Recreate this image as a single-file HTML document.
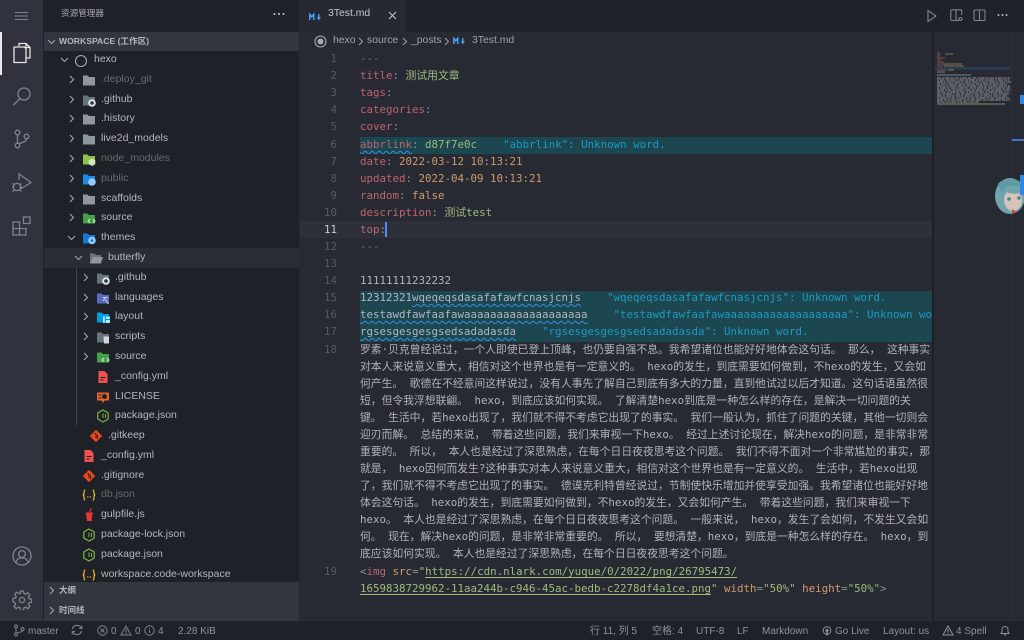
<!DOCTYPE html>
<html lang="zh"><head><meta charset="utf-8"><title>3Test.md</title>
<style>
html,body{margin:0;padding:0;width:1024px;height:640px;overflow:hidden;background:#282a33}
body{position:relative;font-family:"Liberation Sans","Noto Sans CJK SC",sans-serif;color:#b4b6bc}
div,span,svg{box-sizing:border-box}
.abs,.abs>*{position:absolute}
#act{position:absolute;left:0;top:0;width:43px;height:621px;background:#30333d}
#side{position:absolute;left:43px;top:0;width:256px;height:621px;background:#1f2129}
#tabs{position:absolute;left:299px;top:0;width:725px;height:32px;background:#20222a}
#tab{position:absolute;left:299px;top:0;width:107px;height:32px;background:#272932}
#status{position:absolute;left:0;top:621px;width:1024px;height:19px;background:#1f2129;font-size:10px;color:#8f9198;line-height:21px}
#status span{position:absolute;top:0;white-space:pre}
#status svg{position:absolute}
.sec{position:absolute;left:44px;width:255px;background:#33353f}
.r{position:absolute;left:0;width:300px;height:20px;margin-top:1px;line-height:19px;font-size:10.5px;color:#b4b6bc;white-space:pre}
.r.dim{color:#686a72}
.r .t{position:absolute;left:calc(94px + 7px*var(--d))}
.r .c{position:absolute;left:calc(60px + 7px*var(--d));top:5px;width:9px;height:9px}
.r .i{position:absolute;left:calc(75px + 7px*var(--d));top:3px;width:14px;height:14px}
.ic{position:absolute;fill:none;stroke:#80838c;stroke-width:1.1}
.g{position:absolute;left:359.5px;width:572px;background:#1c4650}
.n{position:absolute;left:300px;width:37px;text-align:right;font:10.8px/17px "DejaVu Sans Mono",monospace;color:#565963}
.l{position:absolute;left:360px;width:572px;overflow:hidden;height:18px;font:10.8px/17px "DejaVu Sans Mono","Noto Sans CJK SC",monospace;color:#b4b6bc;white-space:pre}
.k{color:#bd6470}.p{color:#8e9097}.s{color:#9fba7b}.o{color:#cf9a6b}.d{color:#1c9ac0}.m{color:#6a6d77}
.w{text-decoration:underline wavy #3a8fe0 1px;text-underline-offset:2px}
.z{position:absolute;left:360px;width:573px;height:17px;font:10.8px/17px "DejaVu Sans Mono","Noto Sans CJK SC",monospace;color:#b0b2b8;white-space:pre;overflow:hidden}
.u{text-decoration:underline #9fba7b 1px;text-underline-offset:2px}
</style></head><body>

<svg width="0" height="0" style="position:absolute">
<defs>
<symbol id="chr" viewBox="0 0 9 9"><path d="M3 1l3.5 3.5L3 8" fill="none" stroke="#a8aab0" stroke-width="1"/></symbol>
<symbol id="chd" viewBox="0 0 9 9"><path d="M1 3l3.5 3.5L8 3" fill="none" stroke="#a8aab0" stroke-width="1"/></symbol>
<symbol id="fg" viewBox="0 0 14 14"><path d="M1 2.5h4.5l1.5 1.5h6v8.5H1z" fill="#8f979b"/></symbol>
<symbol id="fgit" viewBox="0 0 14 14"><path d="M1 2.5h4.5l1.5 1.5h6v8.5H1z" fill="#66757c"/><circle cx="10" cy="10" r="3.8" fill="#dfe3e6"/><circle cx="10" cy="10" r="1.8" fill="#30333d"/></symbol>
<symbol id="fnode" viewBox="0 0 14 14"><path d="M1 2.5h4.5l1.5 1.5h6v8.5H1z" fill="#8bc34a"/><path d="M10 6.5l3.3 1.9v3.7L10 14l-3.3-1.9V8.4z" fill="#d5e8c0"/></symbol>
<symbol id="fpub" viewBox="0 0 14 14"><path d="M1 2.5h4.5l1.5 1.5h6v8.5H1z" fill="#1e88e5"/><circle cx="10" cy="10" r="3.8" fill="#90caf9"/></symbol>
<symbol id="fsrc" viewBox="0 0 14 14"><path d="M1 2.5h4.5l1.5 1.5h6v8.5H1z" fill="#43a047"/><path d="M8 8l-2 2 2 2M11 8l2 2-2 2" stroke="#c8e6c9" stroke-width="1.2" fill="none"/></symbol>
<symbol id="fthm" viewBox="0 0 14 14"><path d="M1 2.5h4.5l1.5 1.5h6v8.5H1z" fill="#1976d2"/><circle cx="10" cy="9.5" r="3.8" fill="#90caf9"/><circle cx="10" cy="9.5" r="1.3" fill="#1976d2"/></symbol>
<symbol id="fopen" viewBox="0 0 14 14"><path d="M1 2.5h4.5l1.5 1.5h5v2H3.5L1 12.5z" fill="#6b7378"/><path d="M3.5 6H14l-2.2 6.5H1z" fill="#8f979b"/></symbol>
<symbol id="flang" viewBox="0 0 14 14"><path d="M1 2.5h4.5l1.5 1.5h6v8.5H1z" fill="#5c6bc0"/><path d="M7 6.5h5M9.5 6l-2.5 4M9 8l3.5 5" stroke="#c5cae9" stroke-width="1" fill="none"/></symbol>
<symbol id="flay" viewBox="0 0 14 14"><path d="M1 2.5h4.5l1.5 1.5h6v8.5H1z" fill="#039be5"/><path d="M7 6.5h7V13H7z" fill="#b3e5fc"/><path d="M9.3 6.5V13M9.3 9.5H14" stroke="#039be5"/></symbol>
<symbol id="fscr" viewBox="0 0 14 14"><path d="M1 2.5h4.5l1.5 1.5h6v8.5H1z" fill="#66757c"/><path d="M7.5 6.5H13v7H8z" fill="#cfd8dc"/></symbol>
<symbol id="yml" viewBox="0 0 14 14"><path d="M2.5 1H8.5L11.5 4V13H2.5z" fill="#ef5350"/><path d="M4.5 7.5h5M4.5 10h3" stroke="#2a1d20" stroke-width="1"/></symbol>
<symbol id="lic" viewBox="0 0 14 14"><path d="M1 2.5h12v8H8.5L7 13l-1.5-2.5H1z" fill="#e8622c"/><circle cx="8.5" cy="6.5" r="2.5" fill="#2a1d20"/><path d="M2.5 5h3M2.5 8h3" stroke="#2a1d20"/></symbol>
<symbol id="pkg" viewBox="0 0 14 14"><path d="M7 1l5.2 3v6L7 13l-5.2-3V4z" fill="none" stroke="#7cb342" stroke-width="1.2"/><path d="M7 4.5v4.5M9.5 5v4" stroke="#7cb342" stroke-width="1"/></symbol>
<symbol id="git" viewBox="0 0 14 14"><path d="M7 .8L13.2 7 7 13.2.8 7z" fill="#e64a19"/><path d="M5.5 4l3 3v3M7 5.5V9" stroke="#2a1d20" stroke-width="1" fill="none"/></symbol>
<symbol id="js" viewBox="0 0 14 14"><path d="M3.2 2C2 2 2 4 2 5.5 2 7 .8 7 .8 7 .8 7 2 7 2 8.5 2 10 2 12 3.2 12M10.8 2C12 2 12 4 12 5.5 12 7 13.2 7 13.2 7 13.2 7 12 7 12 8.5 12 10 12 12 10.8 12" fill="none" stroke="#f9c02e" stroke-width="1.2"/><path d="M5 9h.9M6.6 9h.9M8.2 9h.9" stroke="#f9c02e" stroke-width="1"/></symbol>
<symbol id="gulp" viewBox="0 0 14 14"><path d="M4 5h6.5l-.9 8H5z" fill="#e53935"/><path d="M3.5 5h7.5M7.5 5L8.5 1.2 10 .8" stroke="#e53935" stroke-width="1.1" fill="none"/></symbol>
<symbol id="md" viewBox="0 0 13 8"><path d="M.8 7V1.2l2 2.6 2-2.6V7" fill="none" stroke="#42a5f5" stroke-width="1.5"/><path d="M9.8 1v4" stroke="#42a5f5" stroke-width="1.5"/><path d="M7.6 4.4h4.4L9.8 7.4z" fill="#42a5f5"/></symbol>
</defs></svg>

<!-- activity bar -->
<div id="act"></div>
<div style="position:absolute;left:0;top:32px;width:2px;height:43px;background:#e8e8e8"></div>
<svg class="ic" style="left:15px;top:11px" width="14" height="10"><path d="M0 1.5h13M0 5h13M0 8.5h13"/></svg>
<svg class="ic" style="left:12px;top:42px;stroke:#e6e6e6;stroke-width:1.3" width="20" height="22" viewBox="0 0 20 22"><path d="M7 4V1.5h7l4 4V16h-4M14 1.5V5.5h4M2 5h10.5L14 6.5V20.5H2z" stroke-linejoin="round"/></svg>
<svg class="ic" style="left:12px;top:86px;stroke-width:1.3" width="20" height="20" viewBox="0 0 20 20"><circle cx="12" cy="8" r="6"/><path d="M8 12.5L1.5 19"/></svg>
<svg class="ic" style="left:13px;top:129px;stroke-width:1.3" width="18" height="20" viewBox="0 0 18 20"><circle cx="4.5" cy="3.5" r="2.3"/><circle cx="4.5" cy="16.5" r="2.3"/><circle cx="13.5" cy="7.5" r="2.3"/><path d="M4.5 6v8M13.5 10c0 3.5-5 3-7.5 4.8"/></svg>
<svg class="ic" style="left:11px;top:172px;stroke-width:1.3" width="22" height="22" viewBox="0 0 22 22"><path d="M8 8V2l12 8.5L9.5 17"/><circle cx="6" cy="15" r="3.6"/><path d="M1.5 11.5l2 1.2M10.5 11.5l-2 1.2M1 15h1.5M9.5 15H11M1.5 19.5l2-1.5M10.5 19.5l-2-1.5"/></svg>
<svg class="ic" style="left:12px;top:216px;stroke-width:1.3" width="20" height="20" viewBox="0 0 20 20"><path d="M1 6h6.5v6.5H1zM1 12.5h6.5V19H1zM7.5 12.5H14V19H7.5z"/><path d="M11.5 1H18v6.5h-6.5z"/></svg>
<svg class="ic" style="left:12px;top:546px;stroke-width:1.3" width="20" height="20" viewBox="0 0 20 20"><circle cx="10" cy="10" r="9"/><circle cx="10" cy="8" r="3.4"/><path d="M3.8 16.5c1-3.5 3.5-4.6 6.2-4.6s5.200 1.100 6.200 4.600"/></svg>
<svg class="ic" style="left:12px;top:590px;stroke-width:1.3" width="20" height="20" viewBox="0 0 20 20"><circle cx="10" cy="10" r="2.6"/><path d="M8.500 1h3l.5 2.600 1.600.7 2.200-1.500 2.100 2.100-1.500 2.200.7 1.600 2.600.5v3l-2.600.5-.7 1.600 1.500 2.200-2.100 2.100-2.200-1.500-1.600.7-.5 2.600h-3l-.5-2.600-1.600-.7-2.200 1.500-2.100-2.100 1.500-2.200-.7-1.600L.9 11.500v-3l2.600-.5.7-1.600-1.500-2.200 2.100-2.100 2.200 1.500 1.600-.7z"/></svg>

<!-- sidebar -->
<div id="side"></div>
<div class="abs" style="left:0;top:0;width:300px;height:32px">
 <span style="left:61px;top:6px;font-size:8.6px;line-height:14px;color:#a4a6ac;white-space:pre">资源管理器</span>
 <svg style="left:273px;top:12px" width="12" height="4"><circle cx="1.500" cy="2" r="1" fill="#c4c6cc"/><circle cx="6" cy="2" r="1" fill="#c4c6cc"/><circle cx="10.500" cy="2" r="1" fill="#c4c6cc"/></svg>
</div>
<div class="sec" style="top:32px;height:19px"></div>
<svg style="position:absolute;left:47px;top:37px;width:9px;height:9px"><use href="#chd"/></svg>
<span style="position:absolute;left:59px;top:33px;font-size:8.6px;line-height:17px;font-weight:bold;color:#b4b6bc;white-space:pre">WORKSPACE (工作区)</span>
<div style="position:absolute;left:44px;top:248px;width:255px;height:20px;background:#2b2d36"></div>
<div style="position:absolute;left:76px;top:268px;width:1px;height:157px;background:#44464f"></div>

<div class="r" style="top:49px;--d:0"><svg class="c"><use href="#chd"/></svg><svg class="i" viewBox="0 0 14 14" style="left:74px;top:4px"><circle cx="7" cy="7" r="5.500" fill="none" stroke="#a8aab0" stroke-width="1.100"/></svg><span class="t">hexo</span></div>
<div class="r dim" style="top:69px;--d:1"><svg class="c"><use href="#chr"/></svg><svg class="i"><use href="#fg"/></svg><span class="t">.deploy_git</span></div>
<div class="r" style="top:89px;--d:1"><svg class="c"><use href="#chr"/></svg><svg class="i"><use href="#fgit"/></svg><span class="t">.github</span></div>
<div class="r" style="top:108px;--d:1"><svg class="c"><use href="#chr"/></svg><svg class="i"><use href="#fg"/></svg><span class="t">.history</span></div>
<div class="r" style="top:128px;--d:1"><svg class="c"><use href="#chr"/></svg><svg class="i"><use href="#fg"/></svg><span class="t">live2d_models</span></div>
<div class="r dim" style="top:148px;--d:1"><svg class="c"><use href="#chr"/></svg><svg class="i"><use href="#fnode"/></svg><span class="t">node_modules</span></div>
<div class="r dim" style="top:168px;--d:1"><svg class="c"><use href="#chr"/></svg><svg class="i"><use href="#fpub"/></svg><span class="t">public</span></div>
<div class="r" style="top:188px;--d:1"><svg class="c"><use href="#chr"/></svg><svg class="i"><use href="#fg"/></svg><span class="t">scaffolds</span></div>
<div class="r" style="top:207px;--d:1"><svg class="c"><use href="#chr"/></svg><svg class="i"><use href="#fsrc"/></svg><span class="t">source</span></div>
<div class="r" style="top:227px;--d:1"><svg class="c"><use href="#chd"/></svg><svg class="i"><use href="#fthm"/></svg><span class="t">themes</span></div>
<div class="r" style="top:247px;--d:2"><svg class="c"><use href="#chd"/></svg><svg class="i"><use href="#fopen"/></svg><span class="t">butterfly</span></div>
<div class="r" style="top:267px;--d:3"><svg class="c"><use href="#chr"/></svg><svg class="i"><use href="#fgit"/></svg><span class="t">.github</span></div>
<div class="r" style="top:287px;--d:3"><svg class="c"><use href="#chr"/></svg><svg class="i"><use href="#flang"/></svg><span class="t">languages</span></div>
<div class="r" style="top:306px;--d:3"><svg class="c"><use href="#chr"/></svg><svg class="i"><use href="#flay"/></svg><span class="t">layout</span></div>
<div class="r" style="top:326px;--d:3"><svg class="c"><use href="#chr"/></svg><svg class="i"><use href="#fscr"/></svg><span class="t">scripts</span></div>
<div class="r" style="top:346px;--d:3"><svg class="c"><use href="#chr"/></svg><svg class="i"><use href="#fsrc"/></svg><span class="t">source</span></div>
<div class="r" style="top:366px;--d:3"><svg class="i"><use href="#yml"/></svg><span class="t">_config.yml</span></div>
<div class="r" style="top:386px;--d:3"><svg class="i"><use href="#lic"/></svg><span class="t">LICENSE</span></div>
<div class="r" style="top:405px;--d:3"><svg class="i"><use href="#pkg"/></svg><span class="t">package.json</span></div>
<div class="r" style="top:425px;--d:2"><svg class="i"><use href="#git"/></svg><span class="t">.gitkeep</span></div>
<div class="r" style="top:445px;--d:1"><svg class="i"><use href="#yml"/></svg><span class="t">_config.yml</span></div>
<div class="r" style="top:465px;--d:1"><svg class="i"><use href="#git"/></svg><span class="t">.gitignore</span></div>
<div class="r dim" style="top:484px;--d:1"><svg class="i"><use href="#js"/></svg><span class="t">db.json</span></div>
<div class="r" style="top:504px;--d:1"><svg class="i"><use href="#gulp"/></svg><span class="t">gulpfile.js</span></div>
<div class="r" style="top:524px;--d:1"><svg class="i"><use href="#pkg"/></svg><span class="t">package-lock.json</span></div>
<div class="r" style="top:544px;--d:1"><svg class="i"><use href="#pkg"/></svg><span class="t">package.json</span></div>
<div class="r" style="top:564px;--d:1"><svg class="i"><use href="#js"/></svg><span class="t">workspace.code-workspace</span></div>

<div class="sec" style="top:582px;height:39px"></div>
<svg style="position:absolute;left:47px;top:586px;width:9px;height:9px"><use href="#chr"/></svg>
<svg style="position:absolute;left:47px;top:606px;width:9px;height:9px"><use href="#chr"/></svg>
<span style="position:absolute;left:59px;top:583px;font-size:8.500px;line-height:15px;font-weight:bold;color:#b4b6bc">大纲</span>
<span style="position:absolute;left:59px;top:603px;font-size:8.500px;line-height:15px;font-weight:bold;color:#b4b6bc">时间线</span>

<!-- tabs -->
<div id="tabs"></div><div id="tab"></div>
<svg style="position:absolute;left:309px;top:13px" width="13" height="8"><use href="#md"/></svg>
<span style="position:absolute;left:328px;top:6px;font-size:10.400px;line-height:16px;color:#c4c6cc">3Test.md</span>
<svg style="position:absolute;left:388px;top:11px" width="9" height="9"><path d="M1 1l7 7M8 1L1 8" stroke="#c4c6cc" stroke-width="1"/></svg>
<svg class="ic" style="left:926px;top:9px" width="12" height="14" viewBox="0 0 12 14"><path d="M2 1.500l8 5.500-8 5.500z"/></svg>
<svg class="ic" style="left:950px;top:9px" width="13" height="13" viewBox="0 0 13 13"><path d="M9 11.500H1.500a.7.700 0 0 1-.7-.7V1.500A.7.700 0 0 1 1.500.8h9.500a.7.700 0 0 1 .7.700V6M6 1v10.500"/><circle cx="10.500" cy="10" r="1.500"/></svg>
<svg class="ic" style="left:973px;top:9px" width="13" height="13" viewBox="0 0 13 13"><rect x="1" y="1" width="11" height="10.500" rx="1"/><path d="M6.500 1v10.500"/></svg>
<svg style="position:absolute;left:997px;top:13px" width="11" height="4"><circle cx="1.500" cy="2" r="1" fill="#b4b6bc"/><circle cx="5.500" cy="2" r="1" fill="#b4b6bc"/><circle cx="9.500" cy="2" r="1" fill="#b4b6bc"/></svg>

<!-- breadcrumb -->
<svg style="position:absolute;left:314px;top:35px" width="13" height="13"><circle cx="6.500" cy="6.500" r="5.500" fill="none" stroke="#a8aab0" stroke-width="1.100"/><circle cx="6.500" cy="6.500" r="3" fill="#a8aab0"/></svg>
<div style="position:absolute;left:0;top:33px;width:600px;height:16px;font-size:10.400px;line-height:16px;color:#a0a2a8;white-space:pre">
<span style="position:absolute;top:0;left:333px">hexo</span><span style="position:absolute;top:0;left:367px">source</span><span style="position:absolute;top:0;left:411px">_posts</span><span style="position:absolute;top:0;left:472px">3Test.md</span>
<svg style="position:absolute;left:358px;top:4px;width:6px;height:9px"><path d="M1 1l3.500 3.500L1 8" fill="none" stroke="#a0a2a8"/></svg>
<svg style="position:absolute;left:402px;top:4px;width:6px;height:9px"><path d="M1 1l3.500 3.500L1 8" fill="none" stroke="#a0a2a8"/></svg>
<svg style="position:absolute;left:444px;top:4px;width:6px;height:9px"><path d="M1 1l3.500 3.500L1 8" fill="none" stroke="#a0a2a8"/></svg>
<svg style="position:absolute;left:453px;top:4px;width:13px;height:8px"><use href="#md"/></svg>
</div>

<!-- editor backgrounds -->
<div style="position:absolute;left:300px;top:221px;width:632px;height:17px;background:#2e3039"></div>
<div class="g" style="top:137px;height:17px"></div>
<div class="g" style="top:291px;height:51px"></div>

<!-- line numbers -->
<div class="n" style="top:50px">1</div><div class="n" style="top:67px">2</div><div class="n" style="top:84px">3</div><div class="n" style="top:101px">4</div><div class="n" style="top:118px">5</div><div class="n" style="top:136px">6</div><div class="n" style="top:153px">7</div><div class="n" style="top:170px">8</div><div class="n" style="top:187px">9</div><div class="n" style="top:204px">10</div><div class="n" style="top:221px;color:#c8cad0">11</div><div class="n" style="top:238px">12</div><div class="n" style="top:255px">13</div><div class="n" style="top:272px">14</div><div class="n" style="top:289px">15</div><div class="n" style="top:306px">16</div><div class="n" style="top:323px">17</div><div class="n" style="top:341px">18</div><div class="n" style="top:563px">19</div>

<!-- code -->
<div class="l m" style="top:50px">---</div>
<div class="l" style="top:67px"><span class="k">title</span><span class="p">: </span><span class="s">测试用文章</span></div>
<div class="l" style="top:84px"><span class="k">tags</span><span class="p">:</span></div>
<div class="l" style="top:101px"><span class="k">categories</span><span class="p">:</span></div>
<div class="l" style="top:118px"><span class="k">cover</span><span class="p">:</span></div>
<div class="l" style="top:136px"><span class="k w">abbrlink</span><span class="p">: </span><span class="s">d87f7e0c</span>    <span class="d">"abbrlink": Unknown word.</span></div>
<div class="l" style="top:153px"><span class="k">date</span><span class="p">: </span><span class="o">2022-03-12 10:13:21</span></div>
<div class="l" style="top:170px"><span class="k">updated</span><span class="p">: </span><span class="o">2022-04-09 10:13:21</span></div>
<div class="l" style="top:187px"><span class="k">random</span><span class="p">: </span><span class="o">false</span></div>
<div class="l" style="top:204px"><span class="k">description</span><span class="p">: </span><span class="s">测试test</span></div>
<div class="l" style="top:221px"><span class="k">top</span><span class="p">:</span></div>
<div style="position:absolute;left:385px;top:222px;width:1.500px;height:15px;background:#528bff"></div>
<div class="l m" style="top:238px">---</div>
<div class="l" style="top:272px">11111111232232</div>
<div class="l" style="top:289px">12312321<span class="w">wqeqeqsdasafafawfcnasjcnjs</span>    <span class="d">"wqeqeqsdasafafawfcnasjcnjs": Unknown word.</span></div>
<div class="l" style="top:306px"><span class="w">testawdfawfaafawaaaaaaaaaaaaaaaaaaa</span>    <span class="d">"testawdfawfaafawaaaaaaaaaaaaaaaaaaa": Unknown word.</span></div>
<div class="l" style="top:323px"><span class="w">rgsesgesgesgsedsadadasda</span>    <span class="d">"rgsesgesgesgsedsadadasda": Unknown word.</span></div>

<div class="z" style="top:341px">罗素·贝克曾经说过，一个人即使已登上顶峰，也仍要自强不息。我希望诸位也能好好地体会这句话。 那么， 这种事实</div>
<div class="z" style="top:358px">对本人来说意义重大，相信对这个世界也是有一定意义的。 hexo的发生，到底需要如何做到，不hexo的发生，又会如</div>
<div class="z" style="top:375px">何产生。 歌德在不经意间这样说过，没有人事先了解自己到底有多大的力量，直到他试过以后才知道。这句话语虽然很</div>
<div class="z" style="top:392px">短，但令我浮想联翩。 hexo，到底应该如何实现。 了解清楚hexo到底是一种怎么样的存在，是解决一切问题的关</div>
<div class="z" style="top:409px">键。 生活中，若hexo出现了，我们就不得不考虑它出现了的事实。 我们一般认为，抓住了问题的关键，其他一切则会</div>
<div class="z" style="top:426px">迎刃而解。 总结的来说， 带着这些问题，我们来审视一下hexo。 经过上述讨论现在，解决hexo的问题，是非常非常</div>
<div class="z" style="top:443px">重要的。 所以， 本人也是经过了深思熟虑，在每个日日夜夜思考这个问题。 我们不得不面对一个非常尴尬的事实，那</div>
<div class="z" style="top:460px">就是， hexo因何而发生?这种事实对本人来说意义重大，相信对这个世界也是有一定意义的。 生活中，若hexo出现</div>
<div class="z" style="top:477px">了，我们就不得不考虑它出现了的事实。 德谟克利特曾经说过，节制使快乐增加并使享受加强。我希望诸位也能好好地</div>
<div class="z" style="top:494px">体会这句话。 hexo的发生，到底需要如何做到，不hexo的发生，又会如何产生。 带着这些问题，我们来审视一下</div>
<div class="z" style="top:511px">hexo。 本人也是经过了深思熟虑，在每个日日夜夜思考这个问题。 一般来说， hexo，发生了会如何，不发生又会如</div>
<div class="z" style="top:528px">何。 现在，解决hexo的问题，是非常非常重要的。 所以， 要想清楚，hexo，到底是一种怎么样的存在。 hexo，到</div>
<div class="z" style="top:545px">底应该如何实现。 本人也是经过了深思熟虑，在每个日日夜夜思考这个问题。</div>

<div class="l" style="top:563px"><span class="p">&lt;</span><span class="k">img</span> <span class="o">src</span><span class="p">=</span><span class="s">"<span class="u">https://cdn.nlark.com/yuque/0/2022/png/26795473/</span></span></div>
<div class="l" style="top:580px"><span class="s"><span class="u">1659838729962-11aa244b-c946-45ac-bedb-c2278df4a1ce.png</span>"</span> <span class="o">width</span><span class="p">=</span><span class="s">"50%"</span> <span class="o">height</span><span class="p">=</span><span class="s">"50%"</span><span class="p">&gt;</span></div>

<!-- minimap -->
<div style="position:absolute;left:932px;top:32px;width:2px;height:589px;background:#1e2027"></div>
<div style="position:absolute;left:1011px;top:32px;width:1px;height:589px;background:#2f313a"></div>
<svg style="position:absolute;left:934px;top:50px" width="78" height="56" viewBox="0 0 78 56">
 <g fill="none" stroke-width=".8">
  <path d="M3 2h2M3 4h4M3 6h3M3 8h8M3 10h4M3 12h7M3 14h4M3 16h6M3 18h5M3 20h9" stroke="#9c5a64"/>
  <path d="M11 4h8M8 14h20M10 16h20" stroke="#a88a62"/><path d="M14 20h6" stroke="#8ea070"/>
 </g>
 <rect x="1" y="17" width="75" height="2.500" fill="#24405a" opacity=".9"/>
 <path d="M3 22h8" stroke="#8a8c92" stroke-width=".8"/>
 <path d="M3 25h26" stroke="#a0a2a8" stroke-width=".8"/><path d="M29 25h8" stroke="#7aa0b0" stroke-width=".8"/>
 <g fill="none" stroke="#8f9198" stroke-width=".9">
  <path d="M3 28h73" stroke-dasharray="4 1 2 .6 5 .8 3 1.200"/>
  <path d="M3 30h72" stroke-dasharray="2 .8 5 1.100 3 .5 6 1" />
  <path d="M3 32h74" stroke-dasharray="6 .7 2 1.200 4 .6 2 .9"/>
  <path d="M3 34h70" stroke-dasharray="3 1.100 4 .5 2 .9 5 .7"/>
  <path d="M3 36h73" stroke-dasharray="5 .6 3 1 2 .7 7 1.200"/>
  <path d="M3 38h73" stroke-dasharray="2 1 6 .7 3 1.300 4 .5"/>
  <path d="M3 40h74" stroke-dasharray="7 .9 2 .5 4 1.100 3 .8"/>
  <path d="M3 42h72" stroke-dasharray="3 .6 5 1.200 2 .8 6 .6"/>
  <path d="M3 44h73" stroke-dasharray="4 1.200 3 .7 6 .9 2 1"/>
  <path d="M3 46h70" stroke-dasharray="5 .8 2 1 5 .6 3 1.300"/>
  <path d="M3 48h73" stroke-dasharray="2 .6 7 1 3 .8 4 1.100"/>
  <path d="M3 50h73" stroke-dasharray="6 1.100 3 .6 2 .9 5 .7"/>
  <path d="M3 52h42" stroke-dasharray="3 .7 4 1 2 .6"/>
 </g>
 <path d="M3 54h58" stroke="#7f9a64" stroke-width=".9"/><path d="M61 54h10" stroke="#a88a62" stroke-width=".9"/>
</svg>
<div style="position:absolute;left:1020px;top:95px;width:4px;height:9px;background:#2f86e6"></div>
<div style="position:absolute;left:1012px;top:139px;width:12px;height:1.500px;background:#3f76c2"></div>
<div style="position:absolute;left:1020px;top:175px;width:4px;height:20px;background:#2f86e6"></div>

<!-- avatar -->
<svg style="position:absolute;left:993px;top:176px" width="31" height="40" viewBox="0 0 31 40">
 <ellipse cx="17" cy="20" rx="15" ry="18" fill="#6fa5ad"/>
 <path d="M5 8C9 2 23 1 31 8V16L8 15z" fill="#5f9aa3"/>
 <ellipse cx="20" cy="24" rx="9" ry="11" fill="#d8c2bc"/>
 <path d="M11 14c3 4 10 5 20 2v-6H14z" fill="#6fa5ad"/>
 <circle cx="16" cy="23" r="1.800" fill="#3f8a7c"/><circle cx="26" cy="22" r="1.800" fill="#3f8a7c"/>
 <path d="M19 33l5 3-5 2z" fill="#c2563f"/>
 <rect x="27" y="0" width="4" height="19" fill="#2f86e6"/>
</svg>

<!-- status bar -->
<div id="status">
 <svg class="ic" style="left:13px;top:3px;stroke-width:1" width="12" height="13" viewBox="0 0 12 13"><circle cx="3" cy="2.500" r="1.500"/><circle cx="3" cy="10.500" r="1.500"/><circle cx="9.500" cy="5" r="1.500"/><path d="M3 4v5M9.500 6.500C9.500 8.500 5 8 3.800 9.500"/></svg>
 <span style="left:28px">master</span>
 <svg class="ic" style="left:71px;top:3px;stroke-width:1.100" width="12" height="12" viewBox="0 0 12 12"><path d="M1.500 5A4.500 4.500 0 0 1 10 4M10.500 7A4.500 4.500 0 0 1 2 8M10.800 1.500V4.500H8M1.200 10.500V7.500H4"/></svg>
 <svg class="ic" style="left:97px;top:4px;stroke-width:1" width="11" height="11" viewBox="0 0 11 11"><circle cx="5.500" cy="5.500" r="4.700"/><path d="M3.500 3.500l4 4M7.500 3.500l-4 4"/></svg>
 <span style="left:111px">0</span>
 <svg class="ic" style="left:120px;top:4px;stroke-width:1" width="12" height="11" viewBox="0 0 12 11"><path d="M6 1l5 9H1zM6 4v3.500M6 8.300v.8"/></svg>
 <span style="left:135px">0</span>
 <svg class="ic" style="left:144px;top:4px;stroke-width:1" width="11" height="11" viewBox="0 0 11 11"><circle cx="5.500" cy="5.500" r="4.700"/><path d="M5.500 5v3M5.500 3v1"/></svg>
 <span style="left:158px">4</span>
 <span style="left:178px">2.28 KiB</span>
 <span style="left:590px">行 11, 列 5</span>
 <span style="left:652px">空格: 4</span>
 <span style="left:696px">UTF-8</span>
 <span style="left:737px">LF</span>
 <span style="left:762px">Markdown</span>
 <svg style="position:absolute;left:822px;top:5px" width="10" height="10" viewBox="0 0 10 10"><circle cx="5" cy="4.500" r="3.800" fill="none" stroke="#8f9198"/><circle cx="5" cy="4.500" r="1.500" fill="#8f9198"/><path d="M5 5v4.500" stroke="#8f9198" stroke-width="1.500"/></svg>
 <span style="left:835px">Go Live</span>
 <span style="left:883px">Layout: us</span>
 <svg class="ic" style="left:942px;top:4px;stroke-width:1;stroke:#8f9198" width="12" height="11" viewBox="0 0 12 11"><path d="M6 1l5 9H1zM6 4v3.500M6 8.300v.8"/></svg>
 <span style="left:956px">4 Spell</span>
 <svg class="ic" style="left:1000px;top:4px;stroke-width:1;stroke:#8f9198" width="10" height="11" viewBox="0 0 10 11"><path d="M1 8.500h8L8 7V4.500a3 3 0 0 0-6 0V7zM4 9.500a1.200 1.200 0 0 0 2 0"/></svg>
</div>
</body></html>
